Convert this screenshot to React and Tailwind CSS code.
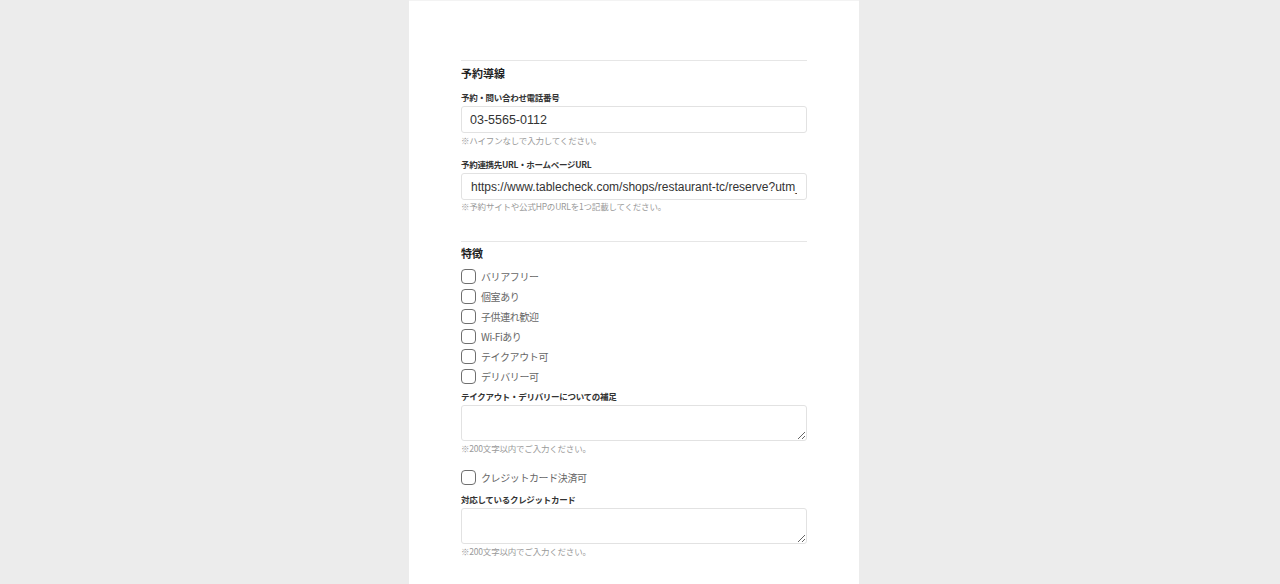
import { useState } from 'react';

const features = ['バリアフリー', '個室あり', '子供連れ歓迎', 'Wi-Fiあり', 'テイクアウト可', 'デリバリー可'];

function Label({ children, className = '' }) {
  return <div className={`text-[8.5px] leading-[14px] font-bold tracking-[-0.3px] text-[#333] ${className}`}>{children}</div>;
}

function Note({ children, className = '' }) {
  return <div className={`text-[8.5px] leading-[12px] tracking-[-0.2px] text-[#999] ${className}`}>{children}</div>;
}

function Check({ label, checked, onChange }) {
  return (
    <label className="flex items-center h-[20px] cursor-pointer" onClick={onChange}>
      <span className={`w-[15px] h-[15px] rounded-[4px] border-[1.5px] border-[#6f6f6f] flex-none ${checked ? 'bg-[#6f6f6f]' : 'bg-white'}`} />
      <span className="ml-[5px] text-[10px] tracking-[-0.4px] text-[#666]">{label}</span>
    </label>
  );
}

export default function App() {
  const [checks, setChecks] = useState({});
  const toggle = (k) => setChecks((c) => ({ ...c, [k]: !c[k] }));

  return (
    <div className="min-h-screen bg-[#ececec] pr-[12px]" style={{ fontFamily: '"Noto Sans CJK JP", "Noto Sans", sans-serif' }}>
      <div className="w-[450px] mx-auto min-h-[584px] bg-white px-[52px] pt-[59px] pb-10 border-t border-[#f3f3f3]">
        <div className="border-t border-[#e6e6e6]" />
        <h2 className="mt-[3px] text-[11px] leading-[18px] font-bold text-[#222]">予約導線</h2>

        <Label className="mt-[8px]">予約・問い合わせ電話番号</Label>
        <input
          className="mt-[2px] w-full h-[27px] border border-[#e2e2e2] rounded-[3px] px-[8px] text-[12.5px] text-[#333] outline-none"
          style={{ fontFamily: '"Liberation Sans", Arial, sans-serif' }}
          defaultValue="03-5565-0112"
        />
        <Note className="mt-[1px]">※ハイフンなしで入力してください。</Note>

        <Label className="mt-[11px]">予約連携先URL・ホームページURL</Label>
        <input
          className="mt-[2px] w-full h-[27px] border border-[#e2e2e2] rounded-[3px] px-[9px] text-[12px] text-[#333] outline-none"
          style={{ fontFamily: '"Liberation Sans", Arial, sans-serif' }}
          defaultValue="https://www.tablecheck.com/shops/restaurant-tc/reserve?utm_source=web"
        />
        <Note>※予約サイトや公式HPのURLを1つ記載してください。</Note>

        <div className="mt-[29px] border-t border-[#e6e6e6]" />
        <h2 className="mt-[2px] text-[11px] leading-[18px] font-bold text-[#222]">特徴</h2>

        <div className="mt-[4px]">
          {features.map((f) => (
            <Check key={f} label={f} checked={!!checks[f]} onChange={() => toggle(f)} />
          ))}
        </div>

        <Label className="mt-[3px]">テイクアウト・デリバリーについての補足</Label>
        <textarea className="mt-[2px] block w-full h-[36px] border border-[#e2e2e2] rounded-[3px] px-2 text-[12px] outline-none" />
        <Note className="mt-[1px]">※200文字以内でご入力ください。</Note>

        <div className="mt-[13px]">
          <Check label="クレジットカード決済可" checked={!!checks.card} onChange={() => toggle('card')} />
        </div>

        <Label className="mt-[5px]">対応しているクレジットカード</Label>
        <textarea className="mt-[2px] block w-full h-[36px] border border-[#e2e2e2] rounded-[3px] px-2 text-[12px] outline-none" />
        <Note className="mt-[1px]">※200文字以内でご入力ください。</Note>
      </div>
    </div>
  );
}
